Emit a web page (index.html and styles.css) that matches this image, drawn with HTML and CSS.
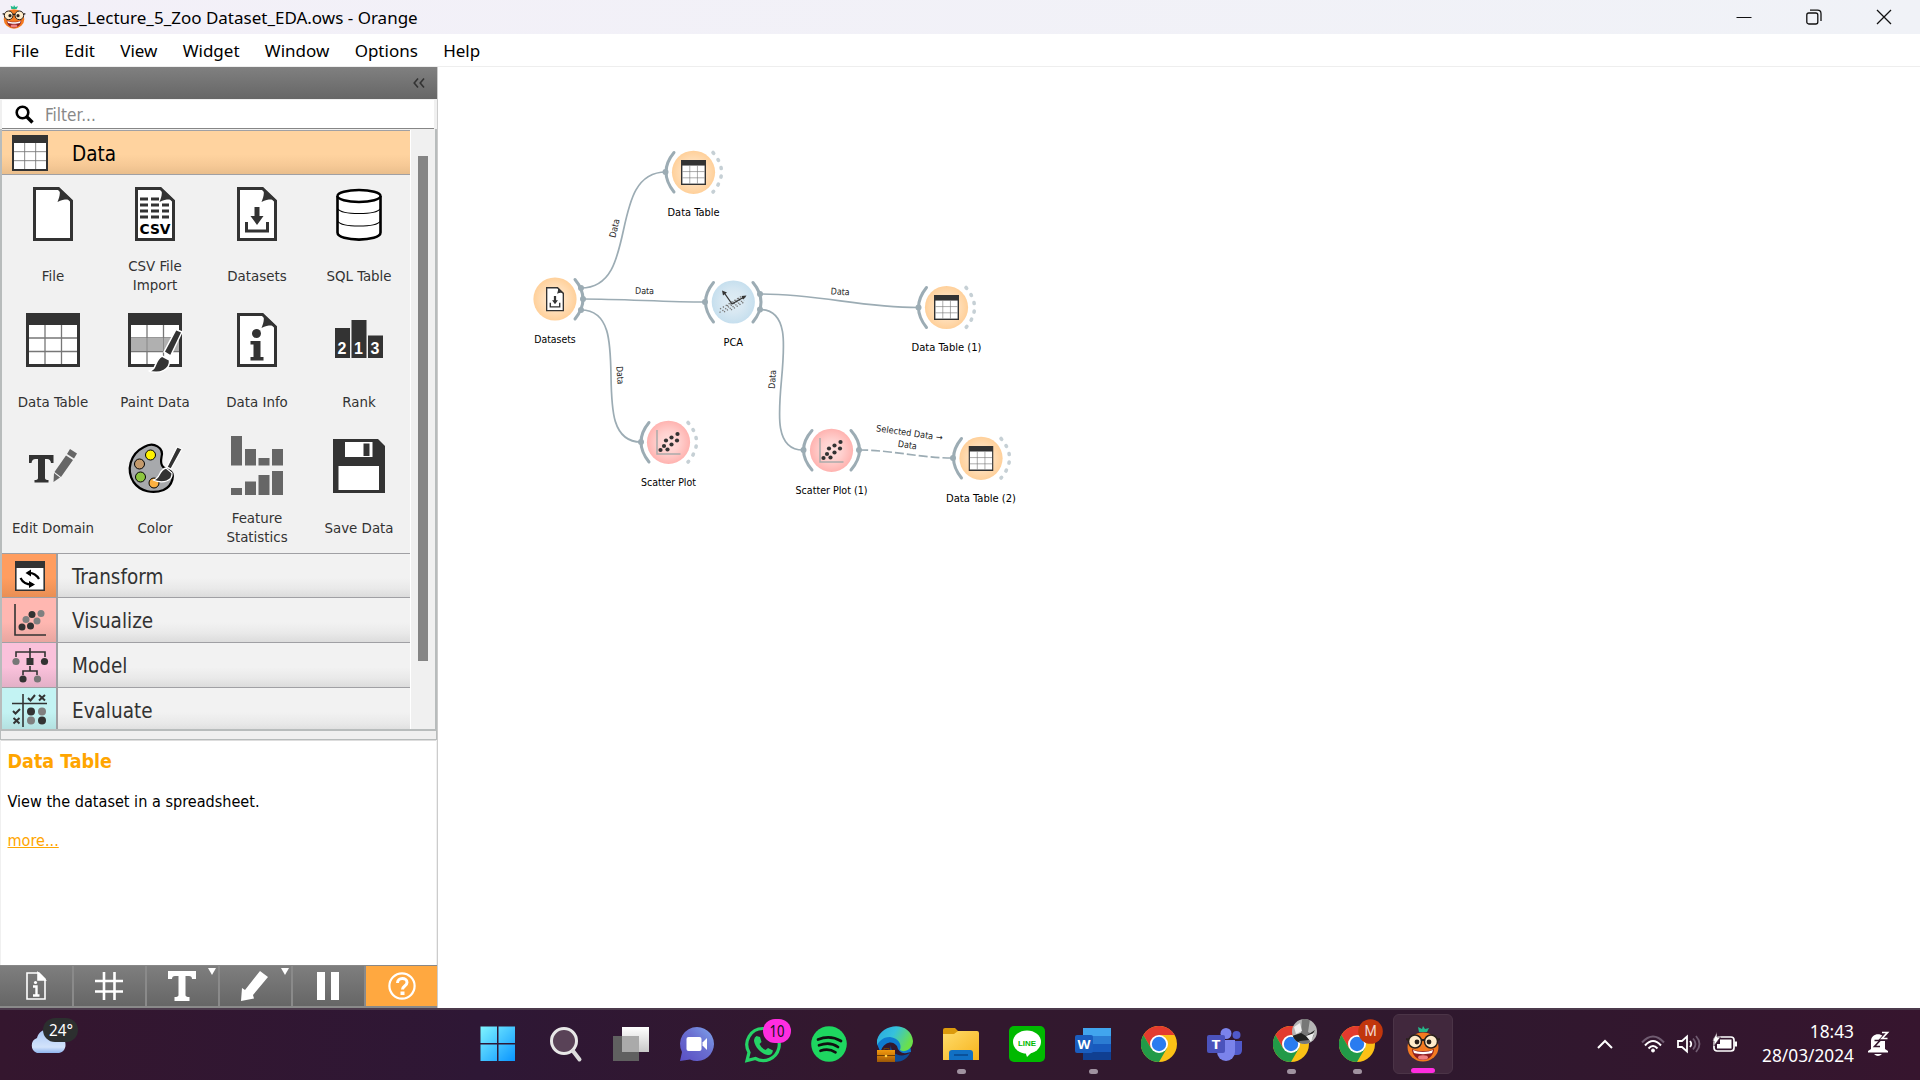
FILE: index.html
```html
<!DOCTYPE html>
<html lang="en">
<head>
<meta charset="utf-8">
<title>Tugas_Lecture_5_Zoo Dataset_EDA.ows - Orange</title>
<link rel="stylesheet" href="styles.css">
</head>
<body>
<svg class="defs" width="0" height="0">
  <defs>
    <radialGradient id="gOrange"><stop offset="0" stop-color="#ffe8d0"/><stop offset=".5" stop-color="#ffe0bc"/><stop offset="1" stop-color="#ffd09a"/></radialGradient>
    <radialGradient id="gRed"><stop offset="0" stop-color="#ffe0de"/><stop offset=".5" stop-color="#ffd0ce"/><stop offset="1" stop-color="#ffb3b0"/></radialGradient>
    <radialGradient id="gBlue"><stop offset="0" stop-color="#dfedf5"/><stop offset=".5" stop-color="#d8e8f2"/><stop offset="1" stop-color="#c6dfee"/></radialGradient>
    <linearGradient id="gWin" x1="0" y1="0" x2="1" y2="1"><stop offset="0" stop-color="#7ff4ff"/><stop offset="1" stop-color="#0a95ff"/></linearGradient>
    <linearGradient id="gChat" x1="1" y1="0" x2="0" y2="1"><stop offset="0" stop-color="#7ea6ee"/><stop offset=".45" stop-color="#6a6fd0"/><stop offset="1" stop-color="#5a4fc4"/></linearGradient>
    <linearGradient id="gCloud" x1="0" y1="0" x2="0" y2="1"><stop offset="0" stop-color="#a9c8f5"/><stop offset=".75" stop-color="#d3e3fb"/><stop offset="1" stop-color="#8fb4ee"/></linearGradient>
    <linearGradient id="gFolder" x1="0" y1="0" x2="1" y2="1"><stop offset="0" stop-color="#ffdc6b"/><stop offset="1" stop-color="#f6b31c"/></linearGradient>
    <linearGradient id="gEdge" x1="0" y1="0" x2="1" y2=".4"><stop offset="0" stop-color="#2aa7e0"/><stop offset=".5" stop-color="#35c1dd"/><stop offset="1" stop-color="#6be04a"/></linearGradient>
    <linearGradient id="gCase" x1="0" y1="0" x2="0" y2="1"><stop offset="0" stop-color="#f09a10"/><stop offset=".5" stop-color="#cf7a08"/><stop offset="1" stop-color="#9a5708"/></linearGradient>
    <linearGradient id="gPane" x1="0" y1="0" x2="0" y2="1"><stop offset="0" stop-color="#fff"/><stop offset="1" stop-color="#c8c8c8"/></linearGradient>

    <symbol id="table" viewBox="0 0 54 54"><rect width="54" height="54" fill="#333"/><path d="M3 12h48v39H3z" fill="#fff"/><path d="M19 12v39M35.500 12v39M3 25h48M3 38.500h48" stroke="#777" stroke-width="1.300"/></symbol>
    <symbol id="page" viewBox="0 0 40 54"><path d="M1.500 1.500h24L38.500 14v38.500h-37z" fill="#fff" stroke="#333" stroke-width="3"/><path d="M25 0c3 4 2 9-.5 15 6-3 10-2.500 14.500-2z" fill="#333"/></symbol>
    <symbol id="dl" viewBox="0 0 40 54"><use href="#page"/><path d="M17.500 20h5v9h4l-6.500 9-6.500-9h4zM8 35h3v7.500h18V35h3v10.500H8z" fill="#333"/></symbol>
    <symbol id="scatter" viewBox="0 0 26 26"><path d="M1.500 1v24H25" fill="none" stroke="#aaa" stroke-width="1.500"/><g fill="#333"><circle cx="5" cy="21" r="2.100"/><circle cx="8.500" cy="17" r="2.100"/><circle cx="12" cy="20.500" r="2.100"/><circle cx="10.500" cy="11.500" r="2.100"/><circle cx="16" cy="15.500" r="2.100"/><circle cx="16" cy="8.500" r="2.100"/><circle cx="21.500" cy="11.500" r="2.100"/><circle cx="22" cy="5" r="2.100"/></g></symbol>
    <symbol id="mascot" viewBox="0 0 34 36"><path d="M13 6l-1-5 4 2 1-3 2 3 4-1-2 4z" fill="#25b98b"/><ellipse cx="17" cy="21" rx="15.500" ry="14.500" fill="#f47a20"/><path d="M6 23c5 3 17 3 22 0 0 6-5 11-11 11S6 29 6 23z" fill="#8e1f22"/><path d="M7 24c5 2.500 15 2.500 20 0l-1 3c-5 1.500-13 1.500-18 0z" fill="#fff"/><ellipse cx="17" cy="31.500" rx="5" ry="2.200" fill="#f08080"/><g fill="#ffeccb" stroke="#2a211c" stroke-width="1.500"><circle cx="9" cy="15.500" r="6.500"/><circle cx="25" cy="15.500" r="6.500"/></g><path d="M0 13l3 1M31 14l3-1M15.500 14h3" stroke="#2a211c" stroke-width="2"/><circle cx="11" cy="16" r="2.400" fill="#2a211c"/><circle cx="23" cy="16" r="2.400" fill="#2a211c"/></symbol>
    <symbol id="chrome" viewBox="0 0 36 36"><circle cx="18" cy="18" r="18" fill="#fbc116"/><path d="M18 9h15.600A18 18 0 0 0 2.400 9l7.800 13.500L18 18z" fill="#e33b2e"/><path d="M2.400 9A18 18 0 0 0 18 36l7.800-13.500L18 18l-7.800 4.500z" fill="#229a48"/><circle cx="18" cy="18" r="9" fill="#fff"/><circle cx="18" cy="18" r="7.200" fill="#2a7cf0"/></symbol>
  </defs>
</svg>

<header class="titlebar">
  <svg class="app-icon" width="24" height="24"><use href="#mascot"/></svg>
  <span class="title">Tugas_Lecture_5_Zoo Dataset_EDA.ows - Orange</span>
  <div class="winbtns">
    <svg width="16" height="16"><path d="M.5 8.500h15" stroke="#111"/></svg>
    <svg width="16" height="16" fill="none" stroke="#111" stroke-width="1.300"><rect x=".8" y="4" width="11" height="11" rx="2"/><path d="M4 1.200h7.500q3.500 0 3.500 3.500V12"/></svg>
    <svg width="16" height="16"><path d="M1 1l14 14M15 1L1 15" stroke="#111" stroke-width="1.300"/></svg>
  </div>
</header>
<nav class="menubar"><span>File</span><span>Edit</span><span>View</span><span>Widget</span><span>Window</span><span>Options</span><span>Help</span></nav>

<main class="work">
  <aside class="dock">
    <div class="dock-head"><svg width="12" height="10" fill="none" stroke="#333" stroke-width="1.600"><path d="M5 .5L1.200 5 5 9.500M11 .5L7.200 5 11 9.500"/></svg></div>
    <div class="filter">
      <svg width="19" height="19" fill="none" stroke="#000"><circle cx="7.500" cy="7.500" r="5.800" stroke-width="2.600"/><path d="M11.500 11.500l6 6" stroke-width="3.400"/></svg>
      <span>Filter...</span>
    </div>
    <div class="toolbox">
      <div class="tabs">
        <div class="tab open"><svg width="36" height="36"><use href="#table"/></svg><span>Data</span></div>
        <div class="grid">
          <div class="tool"><div class="ic"><svg width="40" height="54"><use href="#page"/></svg></div><p>File</p></div>
          <div class="tool"><div class="ic"><svg width="40" height="54"><use href="#page"/><path d="M5 12h8M16 12h8M5 18h8M16 18h8M27 18h7M5 24h8M16 24h8M27 24h7M5 30h8M16 30h8M27 30h7" stroke="#333" stroke-width="3"/><text class="csv" x="4.500" y="47" textLength="31" lengthAdjust="spacingAndGlyphs">CSV</text></svg></div><p>CSV File<br>Import</p></div>
          <div class="tool"><div class="ic"><svg width="40" height="54"><use href="#dl"/></svg></div><p>Datasets</p></div>
          <div class="tool"><div class="ic"><svg width="46" height="54" fill="none" stroke="#000"><path d="M1.500 9v36.500C1.500 55 44.500 55 44.500 45.500V9" fill="#fff" stroke-width="2.600"/><ellipse cx="23" cy="9" rx="21.500" ry="6" fill="#fff" stroke-width="2.400"/><path d="M2 22c4 6 38 6 42 0M2 34.500c4 6 38 6 42 0" stroke-width="1.200"/></svg></div><p>SQL Table</p></div>
          <div class="tool"><div class="ic"><svg width="54" height="54"><use href="#table"/></svg></div><p>Data Table</p></div>
          <div class="tool"><div class="ic"><svg width="54" height="60"><use href="#table" width="54" height="54"/><path d="M3 25h48v13H3z" fill="#b0b0b0"/><path d="M19 25v13M35.500 25v13" stroke="#888"/><path d="M48 16.500l6 2.500-11.500 24-6.500-4zM34 43l7.500 4c1 9-9 15-21 11 9-1 5-10 13.500-15z" fill="#333" stroke="#fff" stroke-width="1.500"/></svg></div><p>Paint Data</p></div>
          <div class="tool"><div class="ic"><svg width="40" height="54"><use href="#page"/><circle cx="19.500" cy="20.500" r="4.500" fill="#333"/><path d="M13.500 28h10v16h3v3.500H13.500V44h3V31.500h-3z" fill="#333"/></svg></div><p>Data Info</p></div>
          <div class="tool"><div class="ic"><svg width="48" height="54"><path d="M0 15h15v30H0zM16.500 7h15v38h-15zM33 22.500h15V45H33z" fill="#333"/><g class="rank"><text x="2.500" y="40.500">2</text><text x="19" y="40.500">1</text><text x="35.500" y="40.500">3</text></g></svg></div><p>Rank</p></div>
          <div class="tool"><div class="ic"><svg width="48" height="54"><path d="M0 16h24.500v8H22q-.5-4-4-4h-2v19q0 2 3.500 2v2.500H5.500V41Q9 41 9 39V20H6.500q-3.500 0-4 4H0z" fill="#333"/><path d="M41 10l7 4.500-3 5-7-4.500zM37 16.500l7 4.500-12 17-6.500-5zM25 34l6 4.500-6.500 4.500z" fill="#666"/></svg></div><p>Edit Domain</p></div>
          <div class="tool"><div class="ic"><svg width="54" height="54"><path d="M16 8C26 2 36 9 33.500 18c-1.500 8 1 11 7 13 8 3 4 16-5 20-10 4-23 2-30-8C-2 31 2 15 16 8z" fill="#a7a9ac" stroke="#000" stroke-width="2.200"/><g stroke="#000"><circle cx="22.500" cy="16" r="5" fill="#fff200"/><circle cx="11.500" cy="25" r="5" fill="#c49a6c"/><circle cx="12.500" cy="38" r="5" fill="#8dc63f"/><circle cx="26" cy="44" r="5" fill="#fbb040"/></g><path d="M49 8l5 2-11 20-4-2zM38 29l6 5c1 8-9 11-19 7 8-1 5-10 13-12z" fill="#333" stroke="#fff" stroke-width="1.300"/></svg></div><p>Color</p></div>
          <div class="tool"><div class="ic"><svg width="54" height="60"><path d="M1-3h11v29.500H1zM15 10h11v16.500H15zM28.500 19h11v7.500h-11zM42 10h11v16.500H42zM1 49h11v7H1zM15 42.500h11V56H15zM28.500 36h11v20h-11zM42 32h11v24H42z" fill="#666"/></svg></div><p>Feature<br>Statistics</p></div>
          <div class="tool"><div class="ic"><svg width="52" height="54"><path d="M0 0h45l7 7v47H0z" fill="#333"/><path d="M12 3h27.500v15H12zM5.500 27h40.500v24H5.500z" fill="#fff"/><path d="M30.500 4.500h6V17h-6z" fill="#333"/></svg></div><p>Save Data</p></div>
        </div>
        <div class="tab short"><i class="c-transform"><svg width="30" height="30"><path d="M.8.800h28.400v28.400H.8z" fill="#fff" stroke="#333" stroke-width="1.600"/><path d="M0 0h30v7H0z" fill="#333"/><path d="M12 12q8-1 12 6M18 23.500Q9 24 5.500 17" fill="none" stroke="#000" stroke-width="2.200"/><path d="M16 8.500v7L10.500 12zM14 20v7l6-3.500z"/></svg></i><span>Transform</span></div>
        <div class="tab"><i class="c-visualize"><svg width="34" height="34"><path d="M2 1v31h31" fill="none" stroke="#333" stroke-width="1.600"/><g fill="#333"><circle cx="9" cy="24" r="3.500"/><circle cx="17.500" cy="23" r="3.500"/><circle cx="19" cy="11.500" r="3.500"/></g><g fill="#808080"><circle cx="13" cy="16.500" r="3.500"/><circle cx="24" cy="18" r="3.500"/><circle cx="28" cy="10.500" r="3.500"/></g></svg></i><span>Visualize</span></div>
        <div class="tab"><i class="c-model"><svg width="36" height="36"><path d="M18 1v10M4 10V5h29v5M18 19v5M11 28v-4h14v4" fill="none" stroke="#333" stroke-width="1.600"/><path d="M14.500 11h7v7h-7z" fill="#333"/><circle cx="4" cy="14.500" r="3.600" fill="#777"/><circle cx="32.500" cy="14.500" r="3.600" fill="#333"/><circle cx="11" cy="32" r="3.600" fill="#333"/><circle cx="25.500" cy="32" r="3.600" fill="#777"/></svg></i><span>Model</span></div>
        <div class="tab"><i class="c-evaluate"><svg width="36" height="36" fill="none" stroke="#333" stroke-width="2"><path d="M11 2v33M0 11.500h35" stroke-width="1.600"/><path d="M16 6l2.500 2.500L23 3M1 19l2.500 2.500L8 17M27 3l6 5.500M33 3l-6 5.500M1.500 26l6 5.500M7.500 26l-6 5.500"/><g stroke="none" fill="#333"><circle cx="19" cy="19.500" r="4"/><circle cx="30" cy="28.500" r="4"/><circle cx="30" cy="19.500" r="4" fill="#808080"/><circle cx="19" cy="28.500" r="4" fill="#808080"/></g></svg></i><span>Evaluate</span></div>
      </div>
      <div class="scroll"><div class="thumb"></div></div>
    </div>
    <div class="splitter"></div>
    <section class="help">
      <h3>Data Table</h3>
      <p>View the dataset in a spreadsheet.</p>
      <a>more...</a>
    </section>
    <div class="tools">
      <b><svg width="20" height="28" fill="none" stroke="#fff" stroke-width="1.600"><path d="M1 1h12l6 6v20H1z"/><path d="M12 1v7h7z" fill="#fff"/><circle cx="9.500" cy="10.500" r="1.600" fill="#fff" stroke="none"/><path d="M7 14.500h3.500V23M7 23.500h6.500" stroke-width="2.400"/></svg></b>
      <b><svg width="28" height="28" stroke="#fff" stroke-width="2.600"><path d="M9 0v28M19.500 0v28M0 9h28M0 19.500h28"/></svg></b>
      <b class="arrow"><svg width="28" height="30"><path d="M0 0h28v8h-4q0-3-3-3h-3.500v19q0 2 4 2v4h-15v-4q4 0 4-2V5H7Q4 5 4 8H0z" fill="#fff"/></svg></b>
      <b class="arrow"><svg width="28" height="30"><path d="M19 0l8 6-15 18 1 3.500L0 30l1-13 3 2z" fill="#fff"/></svg></b>
      <b><svg width="22" height="28"><path d="M0 0h8v28H0zM14 0h8v28h-8z" fill="#fff"/></svg></b>
      <b class="on"><svg width="28" height="28"><circle cx="14" cy="14" r="12.600" fill="none" stroke="#fff" stroke-width="2.200"/><path d="M9.500 11c0-6 9.500-6 9.500-.5 0 3.500-4.500 3.500-4.500 7" fill="none" stroke="#fff" stroke-width="3"/><path d="M12.500 19.500h4v3.500h-4z" fill="#fff"/></svg></b>
    </div>
  </aside>

  <svg class="canvas" viewBox="438 67 1482 941" width="1482" height="941">
    <g class="link">
      <path d="M581 288C641 288 606 172 666 172"/>
      <path d="M583 299C623 299 665 302 705 302"/>
      <path d="M581 310C639 310 583 442 641 442"/>
      <path d="M760 294C820 294 860 307.500 918 307.500"/>
      <path d="M760 309.500C816 309.500 747 450 803 450"/>
      <path d="M859 450C892 450 920 458 953 458" stroke-dasharray="9 3"/>
    </g>
    <g class="in">
      <path d="M674 152.500Q658 172 674 192"/><path d="M713.500 282.500Q697.500 302 713.500 322"/><path d="M926.500 287.500Q910.500 307.500 926.500 327.500"/><path d="M649 422.500Q633 442 649 462"/><path d="M812 430.500Q795 450 812 470"/><path d="M961.500 438.500Q945.500 458 961.500 478"/>
      <path d="M575 279.500Q591 299 575 319"/><path d="M753 282.500Q769 302 753 322"/><path d="M851 430.500Q868 450 851 470"/>
    </g>
    <g class="none">
      <path d="M713 152.500Q730 172 713 192"/><path d="M966 287.500Q983 307.500 966 327.500"/><path d="M688 422.500Q705 442 688 462"/><path d="M1001 438.500Q1018 458 1001 478"/>
    </g>
    <g fill="#9cacb4"><circle cx="581" cy="288" r="3"/><circle cx="583" cy="299" r="3"/><circle cx="581" cy="310" r="3"/><circle cx="665.500" cy="172" r="3"/><circle cx="705" cy="302" r="3"/><circle cx="760" cy="294" r="3"/><circle cx="760" cy="309.500" r="3"/><circle cx="918.500" cy="307.500" r="3"/><circle cx="641" cy="442" r="3"/><circle cx="803.500" cy="450" r="3"/><circle cx="859" cy="450" r="3"/><circle cx="953" cy="458" r="3"/></g>
    <g fill="url(#gOrange)"><circle cx="693.500" cy="172.300" r="21.600"/><circle cx="555" cy="299" r="21.600"/><circle cx="946.500" cy="307.500" r="21.600"/><circle cx="981" cy="458.300" r="21.600"/></g>
    <g fill="url(#gRed)"><circle cx="668.500" cy="442.300" r="21.600"/><circle cx="831.500" cy="450.300" r="21.600"/></g>
    <circle cx="733.300" cy="302" r="21.600" fill="url(#gBlue)"/>
    <use href="#table" x="681" y="160" width="25" height="25"/><use href="#table" x="934" y="295" width="25" height="25"/><use href="#table" x="968.500" y="446" width="25" height="25"/>
    <use href="#dl" x="546" y="287" width="18" height="24.500"/>
    <use href="#scatter" x="655.500" y="429" width="26" height="26"/><use href="#scatter" x="818.500" y="437" width="26" height="26"/>
    <g fill="none" stroke="#777" stroke-width="1.300" stroke-dasharray="1.300 2"><path d="M719.500 312.500l26-16M720 309l22-13M724 312l20-12M727 306l14-9M731 310l13-8"/></g>
    <path d="M732 304l-8-11.500M732 304l12-7" stroke="#333" stroke-width="1.300"/><path d="M722 290.500l5 2-4 3zM746.500 295.500l-5 .5 2 3.500z" fill="#333"/>
    <g class="node-label">
      <text x="693.500" y="216" textLength="52" lengthAdjust="spacingAndGlyphs">Data Table</text>
      <text x="555" y="343" textLength="41.500" lengthAdjust="spacingAndGlyphs">Datasets</text>
      <text x="733.300" y="346" textLength="19.500" lengthAdjust="spacingAndGlyphs">PCA</text>
      <text x="946.500" y="351" textLength="70" lengthAdjust="spacingAndGlyphs">Data Table (1)</text>
      <text x="668.500" y="486" textLength="55" lengthAdjust="spacingAndGlyphs">Scatter Plot</text>
      <text x="831.500" y="494" textLength="72" lengthAdjust="spacingAndGlyphs">Scatter Plot (1)</text>
      <text x="981" y="502" textLength="70" lengthAdjust="spacingAndGlyphs">Data Table (2)</text>
    </g>
    <g class="link-label">
      <text transform="translate(617.500 229) rotate(-76)" textLength="19" lengthAdjust="spacingAndGlyphs">Data</text>
      <text transform="translate(644.500 294) rotate(1)" textLength="19" lengthAdjust="spacingAndGlyphs">Data</text>
      <text transform="translate(840 294.800) rotate(4)" textLength="19" lengthAdjust="spacingAndGlyphs">Data</text>
      <text transform="translate(617 375.500) rotate(86)" textLength="18" lengthAdjust="spacingAndGlyphs">Data</text>
      <text transform="translate(775.500 379.500) rotate(-86)" textLength="19" lengthAdjust="spacingAndGlyphs">Data</text>
      <text transform="translate(909 436) rotate(8)" textLength="67" lengthAdjust="spacingAndGlyphs">Selected Data →</text>
      <text transform="translate(907 448) rotate(8)" textLength="19" lengthAdjust="spacingAndGlyphs">Data</text>
    </g>
  </svg>
</main>

<footer class="taskbar">
  <div class="weather"><svg width="52" height="40"><path d="M8 35a8 8 0 0 1 0-15C10 10 24 8 27 18c10-2 14 15 3 17z" fill="url(#gCloud)"/><rect x="14" y="0" width="35" height="24" rx="12" fill="#2c2f2f"/><text class="temp" x="20" y="18" textLength="24" lengthAdjust="spacingAndGlyphs">24°</text></svg></div>
  <div class="apps">
    <div class="app"><svg class="start" width="36" height="36"><path d="M.5.500H17V17H.5zM18.500.500H35V17H18.500zM.5 18.500H17V35H.5zM18.500 18.500H35V35H18.500z" fill="url(#gWin)"/></svg></div>
    <div class="app"><svg width="36" height="36"><circle cx="17" cy="15" r="12.500" fill="#594257" stroke="#e8e8e8" stroke-width="3"/><path d="M26 25l6.500 8.500" stroke="#dcdcdc" stroke-width="4" stroke-linecap="round"/></svg></div>
    <div class="app"><svg width="36" height="36"><path d="M0 10h26v25H0z" fill="#606060"/><path d="M9 1h27v25H9z" fill="url(#gPane)"/><path d="M9 10h17v16H9z" fill="#aaa"/></svg></div>
    <div class="app"><svg width="36" height="36"><path d="M18 1a17 17 0 1 1-7 32.500L1 35l2-9A17 17 0 0 1 18 1z" fill="url(#gChat)"/><rect x="7.500" y="11" width="15" height="14" rx="2" fill="#fff"/><path d="M23.500 16.500l4.500-4.500v12l-4.500-4.500z" fill="#fff"/></svg></div>
    <div class="app"><svg width="50" height="46"><path d="M25 7.500a16 16 0 1 1-7.500 30L9 39.500l2-8A16 16 0 0 1 25 7.500z" fill="none" stroke="#25d366" stroke-width="3.200"/><path d="M18.500 15l3.500 1 1.500 5-2 2q2 4.500 6 6l2.500-2 5 2.500q-1 5-5 4.500C22 33 16 24 16 19q.5-3 2.500-4z" fill="#25d366"/><rect x="25" y="-2" width="28" height="24" rx="12" fill="#ff2de0"/><text class="num" x="31.500" y="16" textLength="15" lengthAdjust="spacingAndGlyphs">10</text></svg></div>
    <div class="app"><svg width="36" height="36"><circle cx="18" cy="18" r="17.800" fill="#1ed760"/><path d="M7 13.500q12-5 23 1.500M8 19.300q11-4 19 1.700M9.500 24.800q8-3 15 1.500" fill="none" stroke="#111" stroke-width="2.700" stroke-linecap="round"/></svg></div>
    <div class="app"><svg width="36" height="36"><path d="M0 18a18 18 0 0 1 34 8Q22 30 20 20C12 10 0 24 5 30z" fill="#0e7bd0"/><path d="M0 14C5-4 34-5 36 15c0 9-10 12-13 9 2-5-1-12-10-13-8 0-11 5-13 8z" fill="url(#gEdge)"/><path d="M14 19c-1 8 9 14 19 8-4 9-15 11-22 6z" fill="#0d4c98"/><path d="M0 24h18v12H0z" fill="url(#gCase)"/><path d="M7 24v-1.500h5V24M0 29.500h18" stroke="#6b3d05" fill="none"/><circle cx="9" cy="30" r="1.300" fill="#ffd24a"/></svg></div>
    <div class="app run"><svg width="36" height="36"><path d="M0 4q0-2 2-2h10l4 4v6H0z" fill="#dc9a0c"/><path d="M0 8h11l4-3h19q2 0 2 2v27H0z" fill="url(#gFolder)"/><path d="M6 34v-7q0-3 3-3h18q3 0 3 3v7z" fill="#1170c4"/><path d="M11 29h14" stroke="#0a4a90" stroke-width="1.600"/></svg></div>
    <div class="app"><svg width="36" height="36"><rect width="36" height="36" rx="5" fill="#00b900"/><ellipse cx="18" cy="16" rx="14" ry="11.500" fill="#fff"/><path d="M16 25l2 6 8-8z" fill="#fff"/><text class="line" x="9" y="19.500" textLength="18" lengthAdjust="spacingAndGlyphs">LINE</text></svg></div>
    <div class="app run"><svg width="36" height="36"><path d="M8 2h28v8H8z" fill="#41a5ee"/><path d="M8 10h28v8H8z" fill="#2b7cd3"/><path d="M8 18h28v8H8z" fill="#185abd"/><path d="M8 26h28v8H8z" fill="#103f91"/><rect x="0" y="9" width="18" height="18" rx="2" fill="#1a5dbe"/><text class="letter" x="2.500" y="23" textLength="13" lengthAdjust="spacingAndGlyphs">W</text></svg></div>
    <div class="app"><svg width="36" height="36"><use href="#chrome"/></svg></div>
    <div class="app"><svg width="36" height="36"><circle cx="19" cy="7.500" r="5.500" fill="#7b83eb"/><circle cx="29.500" cy="9" r="4" fill="#5059c9"/><path d="M25 15h10v9q0 5-5 5h-5z" fill="#5059c9"/><path d="M10 14h18v12a9 9 0 0 1-18 0z" fill="#7b83eb"/><rect x="0" y="9" width="18" height="18" rx="2" fill="#4b53bc"/><text class="letter" x="4.500" y="23" textLength="9" lengthAdjust="spacingAndGlyphs">T</text></svg></div>
    <div class="app run"><svg width="50" height="50"><use href="#chrome" x="7" y="7" width="36" height="36"/><clipPath id="av"><circle cx="38.500" cy="12.500" r="12.500"/></clipPath><g clip-path="url(#av)"><path d="M25 0h27v27H25z" fill="#b5b5b5"/><path d="M36 0h8l-2 13 6 3-5 9H28l-2-5 9-6z" fill="#777"/><path d="M26 17l9-3 5 3 9-6-6 10-9 1-5 3z" fill="#222"/><path d="M28 8l6-4 2 8-6 3zM40 17l8-3-3 9z" fill="#eee"/></g></svg></div>
    <div class="app run"><svg width="50" height="50"><use href="#chrome" x="7" y="7" width="36" height="36"/><circle cx="38.500" cy="12.500" r="12.300" fill="#c1360c"/><text class="avatar" x="38.500" y="17" text-anchor="middle">M</text></svg></div>
    <div class="app active"><svg width="34" height="36"><use href="#mascot"/></svg></div>
  </div>
  <div class="tray">
    <svg width="16" height="10" fill="none" stroke="#fff" stroke-width="2"><path d="M1 9l7-7 7 7"/></svg>
    <svg class="wifi" width="24" height="18" fill="none" stroke="#fff" stroke-width="2"><path d="M1 7.500q11-12 22 0" stroke="#705c71"/><path d="M4 10.500q8-9 16 0M7.500 13.500q4.500-5 9 0"/><circle cx="12" cy="15.500" r="1.500" fill="#fff" stroke-width="1"/></svg>
    <svg class="vol" width="26" height="20" fill="none" stroke="#fff" stroke-width="1.800"><path d="M2 7v6h4l5 4.500v-15L6 7zM14 7q2.500 3 0 6"/><path d="M17 4.500q5 5.500 0 11M20 2q7 8 0 16" stroke="#705c71"/></svg>
    <svg class="bat" width="26" height="20"><rect x="2" y="3" width="20" height="14" rx="3" fill="none" stroke="#fff" stroke-width="1.700"/><path d="M8 5.500h11.500v9H5V10h3z" fill="#fff"/><path d="M22.500 7.500h2.500v5h-2.500z" fill="#fff"/><path d="M5-2v5h3.500L2 12V7H.5z" fill="#fff" stroke="#35172e" stroke-width=".6"/></svg>
    <div class="clock"><span>18:43</span><span>28/03/2024</span></div>
    <svg class="bell" width="24" height="26"><path d="M4 18V10C4 1 18 1 18 10v8l3 2v1.500H1V20zM7 23h8q-4 4-8 0z" fill="#fff"/><path d="M7.500 9.500H13l-5.500 6H13" fill="none" stroke="#35172e" stroke-width="1.600"/><path d="M15 1h6l-6 7h6" fill="none" stroke="#35172e" stroke-width="4"/><path d="M15 1.500h5.500L15 7.500h5.500" fill="none" stroke="#fff" stroke-width="1.700"/></svg>
  </div>
</footer>
</body>
</html>
```
FILE: styles.css
```css
* { box-sizing: border-box; }
body { margin: 0; width: 1920px; height: 1080px; overflow: hidden; display: flex; flex-direction: column; background: #fff; font-family: "Noto Sans", sans-serif; color: #000; }
svg { display: block; flex: none; overflow: visible; }
p, h3 { margin: 0; }
.defs { position: absolute; width: 0; height: 0; }

.titlebar { height: 34px; flex: none; display: flex; align-items: center; padding: 0 11px 0 2px; background: linear-gradient(90deg, #f3f0f8, #f0f2f7); }
.title { margin-left: 6px; font-size: 17px; white-space: nowrap; }
.winbtns { margin-left: auto; display: flex; gap: 55px 54px; padding-right: 17px; }
.menubar { height: 33px; flex: none; display: flex; align-items: center; gap: 25.300px; padding-left: 12px; border-bottom: 1px solid #eee; font-size: 17px; }

.work { height: 941px; flex: none; display: flex; }
.dock { width: 438px; flex: none; display: flex; flex-direction: column; border-right: 1px solid #ccc; background: #f0f0f0; font-family: "DejaVu Sans Condensed", "DejaVu Sans", sans-serif; font-stretch: condensed; }
.dock-head { height: 32px; flex: none; display: flex; align-items: center; justify-content: flex-end; padding-right: 12px; background: linear-gradient(#808080, #666); }
.filter { height: 29px; flex: none; margin: 1px 3px 0 2px; display: flex; align-items: center; gap: 11px; padding: 1px 0 0 13px; background: #fff; border-bottom: 1px solid #868686; color: #888; font-size: 17px; }
.toolbox { height: 602px; flex: none; display: flex; border: 2px solid #b8bcbc; border-top: 0; padding-top: 1px; overflow: hidden; }
.tabs { width: 408px; flex: none; }
.tab { height: 45px; display: flex; align-items: center; border-top: 1px solid #a0a0a4; background: linear-gradient(#f2f2f2 55%, #e9e9e9 80%, #dcdcdc); font-size: 20.500px; color: #333; }
.tab.short { height: 44px; }
.tab i { width: 56px; height: 100%; display: flex; align-items: center; justify-content: center; padding-left: 2px; border-right: 2px solid #a0a0a4; }
.tab span { margin-left: 14px; padding-top: 2px; }
.tab.open { height: 44px; padding-left: 10px; color: #000; background: linear-gradient(#ffd39f 55%, #f6c996 80%, #e9be8c); }
.tab.open span { margin-left: 24px; }
.c-transform { background: linear-gradient(#ff9d5f 55%, #e98f55); }
.c-visualize { background: linear-gradient(#ffb7b1 55%, #e8a6a0); }
.c-model { background: linear-gradient(#fac1db 55%, #e3b0c7); }
.c-evaluate { background: linear-gradient(#c3f3f3 55%, #b1dddd); }
.grid { height: 379px; display: grid; grid-template-columns: repeat(4, 102px); grid-template-rows: repeat(3, 126px); border-top: 1px solid #a0a0a4; background: #f1f1f1; }
.tool { display: flex; flex-direction: column; align-items: center; padding-top: 12px; }
.ic { height: 54px; flex: none; }
.tool p { height: 40px; margin-top: 15px; display: flex; align-items: center; text-align: center; font-size: 14.900px; line-height: 19px; color: #333; white-space: nowrap; }
.csv { font: bold 14px "DejaVu Sans"; }
.rank { font: bold 16px "Liberation Sans"; fill: #fff; }
.scroll { flex: 1; border-left: 1px solid #fff; background: #f0f0f0; padding: 26px 0 0 7px; }
.thumb { width: 10px; height: 505px; background: #858585; }
.splitter { height: 9px; flex: none; border: 1px solid #b8bcbc; border-top: 0; background: #f0f0f0; }
.help { height: 225px; flex: none; margin: 0 1px; padding: 8px 6.500px; background: #fff; border-top: 1px solid #ddd; font-size: 16.100px; }
.help h3 { font-size: 19.500px; line-height: 26px; color: #ffa500; }
.help p { margin-top: 15px; line-height: 24px; }
.help a { display: inline-block; margin-top: 15px; line-height: 24px; color: #ffa500; text-decoration: underline; }
.tools { height: 43px; flex: none; display: grid; grid-template-columns: 74px repeat(4, 73px) 71px; border-top: 1px solid #888; border-bottom: 2px solid #8a8a8a; }
.tools b { position: relative; display: flex; align-items: center; justify-content: center; padding-right: 1px; border-right: 2px solid #8a8a8a; background: linear-gradient(#7e7e7e, #666); }
.tools .on { background: #ffa840; border: 0; padding: 0; }
.arrow::after { content: ""; position: absolute; top: 2px; right: 2px; border: 4.500px solid transparent; border-top: 7px solid #fff; border-bottom: 0; }
.canvas { background: #fff; }
.link { fill: none; stroke: #9cacb4; stroke-width: 1.700; }
.in { fill: none; stroke: #9cacb4; stroke-width: 3; stroke-linecap: round; }
.none { fill: none; stroke: #c6d0d5; stroke-width: 3.600; stroke-linecap: round; stroke-dasharray: 1 7.600; }
.node-label { font: condensed 11px "DejaVu Sans Condensed", "DejaVu Sans"; text-anchor: middle; }
.link-label { font: condensed 9px "DejaVu Sans Condensed", "DejaVu Sans"; text-anchor: middle; fill: #222; }

.taskbar { height: 72px; flex: none; display: flex; align-items: center; padding-bottom: 2px; border-top: 2px solid #4c3a4c; background: linear-gradient(90deg, #34162e, #2e1735 25%, #33182e 45%, #2f182e 75%, #36152e); color: #fff; }
.weather { width: 466px; padding-left: 29px; align-self: flex-start; padding-top: 8px; }
.temp { font-size: 17px; fill: #fff; }
.apps { display: flex; width: 990px; }
.app { position: relative; width: 66px; height: 60px; display: flex; align-items: center; justify-content: center; }
.start { margin-right: 2px; }
.run::after { content: ""; position: absolute; left: 29px; bottom: 0; width: 9px; height: 5px; border-radius: 3px; background: #a092a0; }
.active { background: #41283d; border: 1px solid #4b3447; border-radius: 6px; width: 60px; margin-left: 3px; }
.active::after { content: ""; position: absolute; left: 17px; bottom: 0; width: 24px; height: 5px; border-radius: 3px; background: #ff2de0; }
.num { font-size: 17px; fill: #111; }
.line { font: bold 8px "Liberation Sans"; fill: #00b900; }
.letter { font: bold 13px "Open Sans"; fill: #fff; }
.avatar { font: 14px Roboto; fill: #f3d5cc; }
.tray { margin-left: auto; display: flex; align-items: center; padding-right: 29px; }
.wifi { margin-left: 28px; }
.vol { margin-left: 11px; }
.bat { margin-left: 10px; }
.clock { width: 116px; display: flex; flex-direction: column; align-items: flex-end; font-size: 17.300px; line-height: 24px; }
.bell { margin-left: 13px; }
```
